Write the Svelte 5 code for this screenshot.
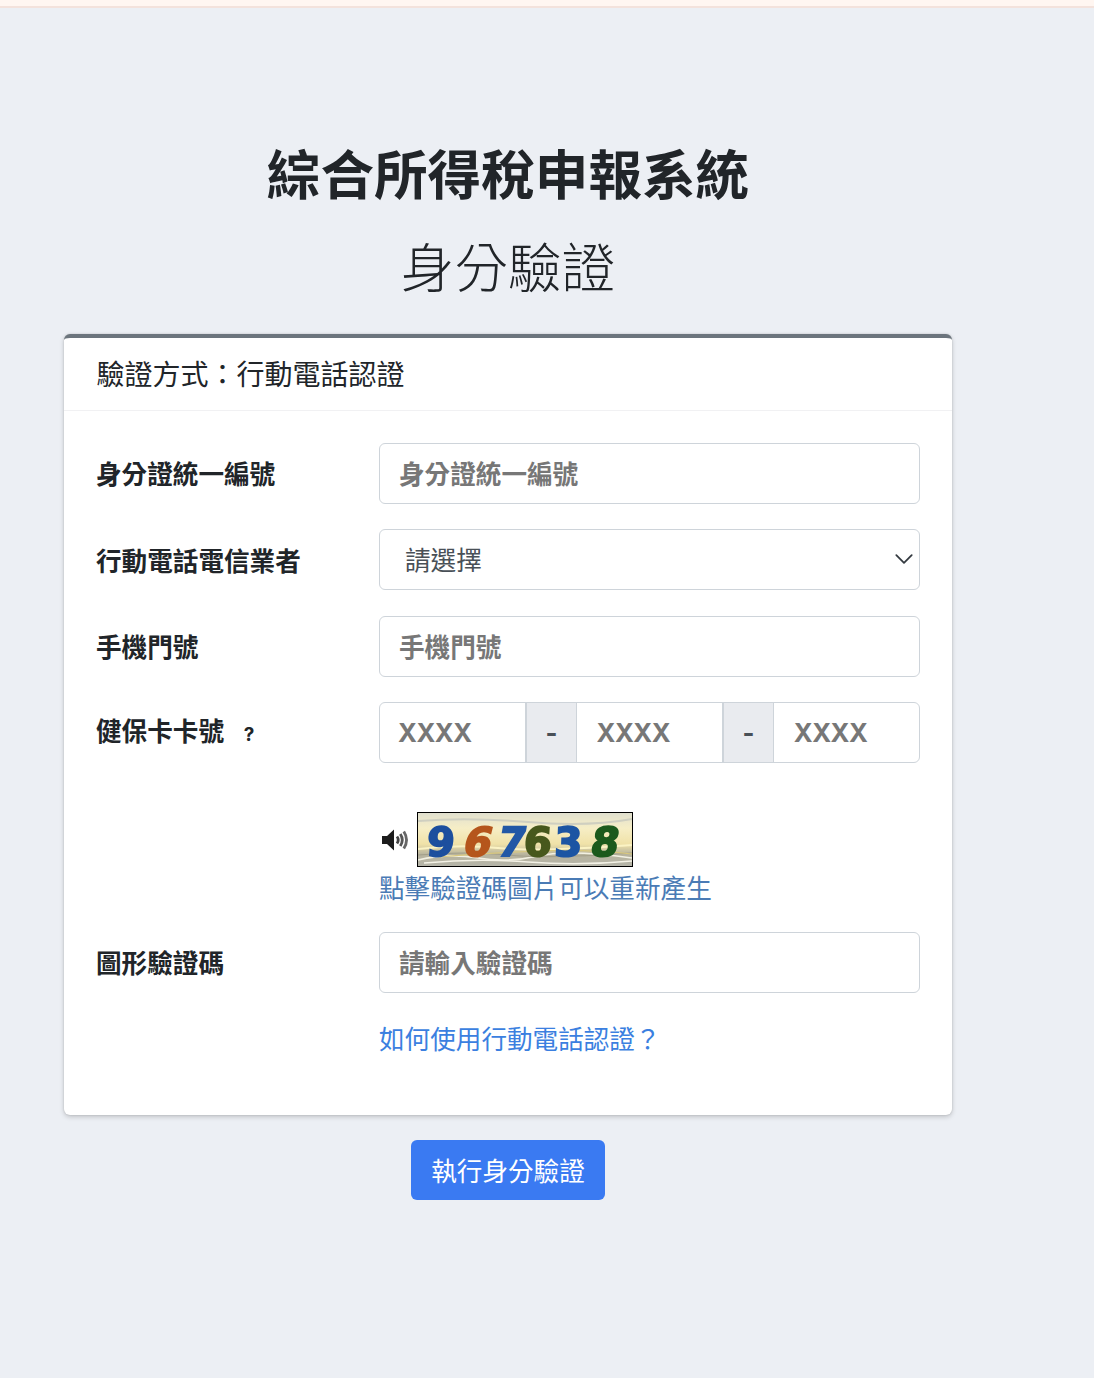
<script lang="ts">
  const digits = [
    { ch: '9', x: 8, color: '#1d4f9e', skew: -4 },
    { ch: '6', x: 43, color: '#b5561f', skew: -14 },
    { ch: '7', x: 78, color: '#2459a6', skew: -10 },
    { ch: '6', x: 105, color: '#47591c', skew: -4 },
    { ch: '3', x: 136, color: '#1f55a3', skew: -2 },
    { ch: '8', x: 171, color: '#1c5a1f', skew: -10 }
  ]
  const streaks = [
    { d: 'M0 47 Q30 40 60 45 T120 43 T214 45', color: '#f2f0e2', w: 1.6 },
    { d: 'M0 42 Q50 38 90 42 T214 40', color: '#a39f8a', w: 1.2 },
    { d: 'M6 50 Q60 45 110 49 T214 48', color: '#f4f2e6', w: 1.4 },
    { d: 'M0 36 Q40 31 80 35 T214 32', color: '#fbf3c4', w: 2 },
    { d: 'M20 44 Q70 40 120 38 T214 41', color: '#d9c87e', w: 1.2 },
    { d: 'M0 8 Q50 4 110 9 T214 6', color: '#cfcfc0', w: 2 }
  ]
</script>

<div class="topbar"></div>

<main class="page">
  <h2 class="title">綜合所得稅申報系統</h2>
  <p class="subtitle">身分驗證</p>

  <section class="card">
    <header class="card-header">驗證方式&#xFF1A;行動電話認證</header>

    <form class="card-body" on:submit|preventDefault>
      <div class="row">
        <label for="idno">身分證統一編號</label>
        <input id="idno" class="control" type="text" placeholder="身分證統一編號" />
      </div>

      <div class="row">
        <label for="carrier">行動電話電信業者</label>
        <div class="select-wrap">
          <select id="carrier" class="control select">
            <option>請選擇</option>
          </select>
          <svg class="chevron" viewBox="0 0 16 10" aria-hidden="true">
            <path d="M1 1l7 7 7-7" fill="none" stroke="#343a40" stroke-width="1.6" stroke-linecap="round" stroke-linejoin="round" />
          </svg>
        </div>
      </div>

      <div class="row">
        <label for="phone">手機門號</label>
        <input id="phone" class="control" type="text" placeholder="手機門號" />
      </div>

      <div class="row">
        <label for="card1">健保卡卡號 <span class="help">?</span></label>
        <div class="input-group">
          <input id="card1" type="text" placeholder="XXXX" />
          <span class="addon">-</span>
          <input type="text" placeholder="XXXX" />
          <span class="addon">-</span>
          <input type="text" placeholder="XXXX" />
        </div>
      </div>

      <div class="captcha-row">
        <div class="captcha-line">
          <svg class="speaker" viewBox="0 0 28 24" aria-hidden="true">
            <path d="M1 8h5l7-6.500v21l-7-6.500H1z" fill="#1c1c1c" />
            <path d="M16 8.500q2.500 3.500 0 7" fill="none" stroke="#444" stroke-width="2.800" />
            <path d="M19.300 6q4 6 0 12" fill="none" stroke="#555" stroke-width="2.800" />
            <path d="M22.800 3.500q5.500 8.500 0 17" fill="none" stroke="#666" stroke-width="2.800" />
          </svg>
          <svg class="captcha" viewBox="0 0 214 53" role="img" aria-label="驗證碼">
            <defs>
              <linearGradient id="sky" x1="0" y1="0" x2="0" y2="1">
                <stop offset="0" stop-color="#deded0" />
                <stop offset="0.3" stop-color="#f6eec6" />
                <stop offset="0.58" stop-color="#f0e2a8" />
                <stop offset="0.76" stop-color="#b8b49e" />
                <stop offset="1" stop-color="#b4b4aa" />
              </linearGradient>
              <filter id="soft"><feGaussianBlur stdDeviation="0.5" /></filter>
            </defs>
            <g filter="url(#soft)">
              <rect x="-2" y="-2" width="218" height="57" fill="url(#sky)" />
              {#each streaks as s}
                <path d={s.d} fill="none" stroke={s.color} stroke-width={s.w} />
              {/each}
              {#each digits as d}
                <text
                  class="digit"
                  fill={d.color}
                  stroke={d.color}
                  transform="translate({d.x} 43) skewX({d.skew})">{d.ch}</text>
              {/each}
            </g>
          </svg>
        </div>
        <a class="refresh" href="#top">點擊驗證碼圖片可以重新產生</a>
      </div>

      <div class="row">
        <label for="code">圖形驗證碼</label>
        <input id="code" class="control" type="text" placeholder="請輸入驗證碼" />
      </div>

      <div class="how">
        <a href="#top">如何使用行動電話認證&#xFF1F;</a>
      </div>
    </form>
  </section>

  <div class="actions">
    <button class="btn" type="button">執行身分驗證</button>
  </div>
</main>

<style>
  :global(body) {
    margin: 0;
    background: #eceff4;
    color: #212529;
    font-family: "Noto Sans CJK TC", "Liberation Sans", sans-serif;
    font-size: 25.6px;
  }

  .topbar {
    height: 6px;
    background: #fff6f1;
    border-bottom: 2px solid #f3e2dc;
  }

  .page {
    width: 888px;
    margin-left: 64px;
    padding-top: 132px;
    min-height: 1238px;
    box-sizing: border-box;
  }

  .title {
    margin: 0;
    font-size: 53.6px;
    line-height: 64px;
    font-weight: 700;
    text-align: center;
  }

  .subtitle {
    margin: 29px 0 37px;
    font-size: 53.6px;
    line-height: 64px;
    font-weight: 300;
    text-align: center;
  }

  .card {
    background: #fff;
    border-top: 4px solid #6c757d;
    border-radius: 6px;
    box-shadow: 0 0 2px rgba(0, 0, 0, 0.15), 0 2px 5px rgba(0, 0, 0, 0.18);
  }

  .card-header {
    box-sizing: border-box;
    height: 73px;
    padding: 0 32px 3px 32.500px;
    display: flex;
    align-items: center;
    font-size: 28px;
    border-bottom: 1px solid #f1f1f3;
  }

  .card-body {
    padding: 32px 32px 58px 32px;
  }

  .row {
    display: grid;
    grid-template-columns: 283px 1fr;
    align-items: center;
    margin-bottom: 25.6px;
  }

  label {
    font-weight: 700;
    font-size: 25.6px;
    line-height: 38px;
  }

  .help {
    margin-left: 14px;
    font-family: Inter, "Liberation Sans", sans-serif;
    font-size: 19px;
    font-weight: 700;
  }

  .control,
  .input-group {
    box-sizing: border-box;
    width: 100%;
    height: 60.8px;
    background: #fff;
    border: 1.6px solid #ced4da;
    border-radius: 6px;
  }

  input,
  select {
    font-family: inherit;
    font-size: 25.6px;
    color: #495057;
    outline: none;
  }

  input::placeholder {
    color: #777;
    font-weight: 700;
    opacity: 1;
  }

  .control {
    padding: 0 19px 2px;
  }

  .select-wrap {
    position: relative;
  }

  .select {
    appearance: none;
    -webkit-appearance: none;
    padding-left: 25px;
  }

  .chevron {
    position: absolute;
    right: 7px;
    top: 25px;
    width: 18px;
    height: 11px;
    pointer-events: none;
  }

  .input-group {
    display: flex;
    overflow: hidden;
  }

  .input-group input {
    flex: 0 0 145.800px;
    width: 145.800px;
    box-sizing: border-box;
    min-width: 0;
    border: 0;
    padding: 0 0 0 20px;
    background: transparent;
    font-family: Inter, "Liberation Sans", sans-serif;
    letter-spacing: -0.5px;
  }

  .input-group input:first-child {
    flex-basis: 145.200px;
    width: 145.200px;
    padding-left: 18px;
  }

  .input-group input:last-child {
    flex: 1;
  }

  .addon {
    flex: 0 0 51.400px;
    box-sizing: border-box;
    display: flex;
    align-items: center;
    justify-content: center;
    background: #e9ebef;
    border-left: 2px solid #ced4da;
    border-right: 1px solid #ced4da;
    color: #495057;
    font-family: Inter, "Liberation Sans", sans-serif;
    font-weight: 700;
    font-size: 25.6px;
  }

  .captcha-row {
    margin: 49px 0 26px 283px;
  }

  .captcha-line {
    display: flex;
    align-items: center;
  }

  .speaker {
    width: 28px;
    height: 24px;
    margin: 1px 8px 0 2px;
  }

  .captcha {
    box-sizing: border-box;
    display: block;
    width: 216px;
    height: 55px;
    border: 1.500px solid #000;
  }

  .digit {
    font-family: "DejaVu Sans", sans-serif;
    font-size: 40px;
    font-weight: 700;
    stroke-width: 2;
  }

  .refresh {
    display: block;
    margin-top: 1px;
    line-height: 38px;
    color: #4a7bb5;
    text-decoration: none;
    white-space: nowrap;
  }

  .how {
    margin-left: 283px;
    padding-top: 1px;
    line-height: 38px;
  }

  .how a {
    color: #3b7fe0;
    text-decoration: none;
  }

  .actions {
    margin-top: 25px;
    text-align: center;
  }

  .btn {
    height: 60px;
    padding: 0 20.500px 2px;
    background: #3a7af2;
    border: 0;
    border-radius: 6px;
    color: #fff;
    font-family: inherit;
    font-size: 25.6px;
  }
</style>
